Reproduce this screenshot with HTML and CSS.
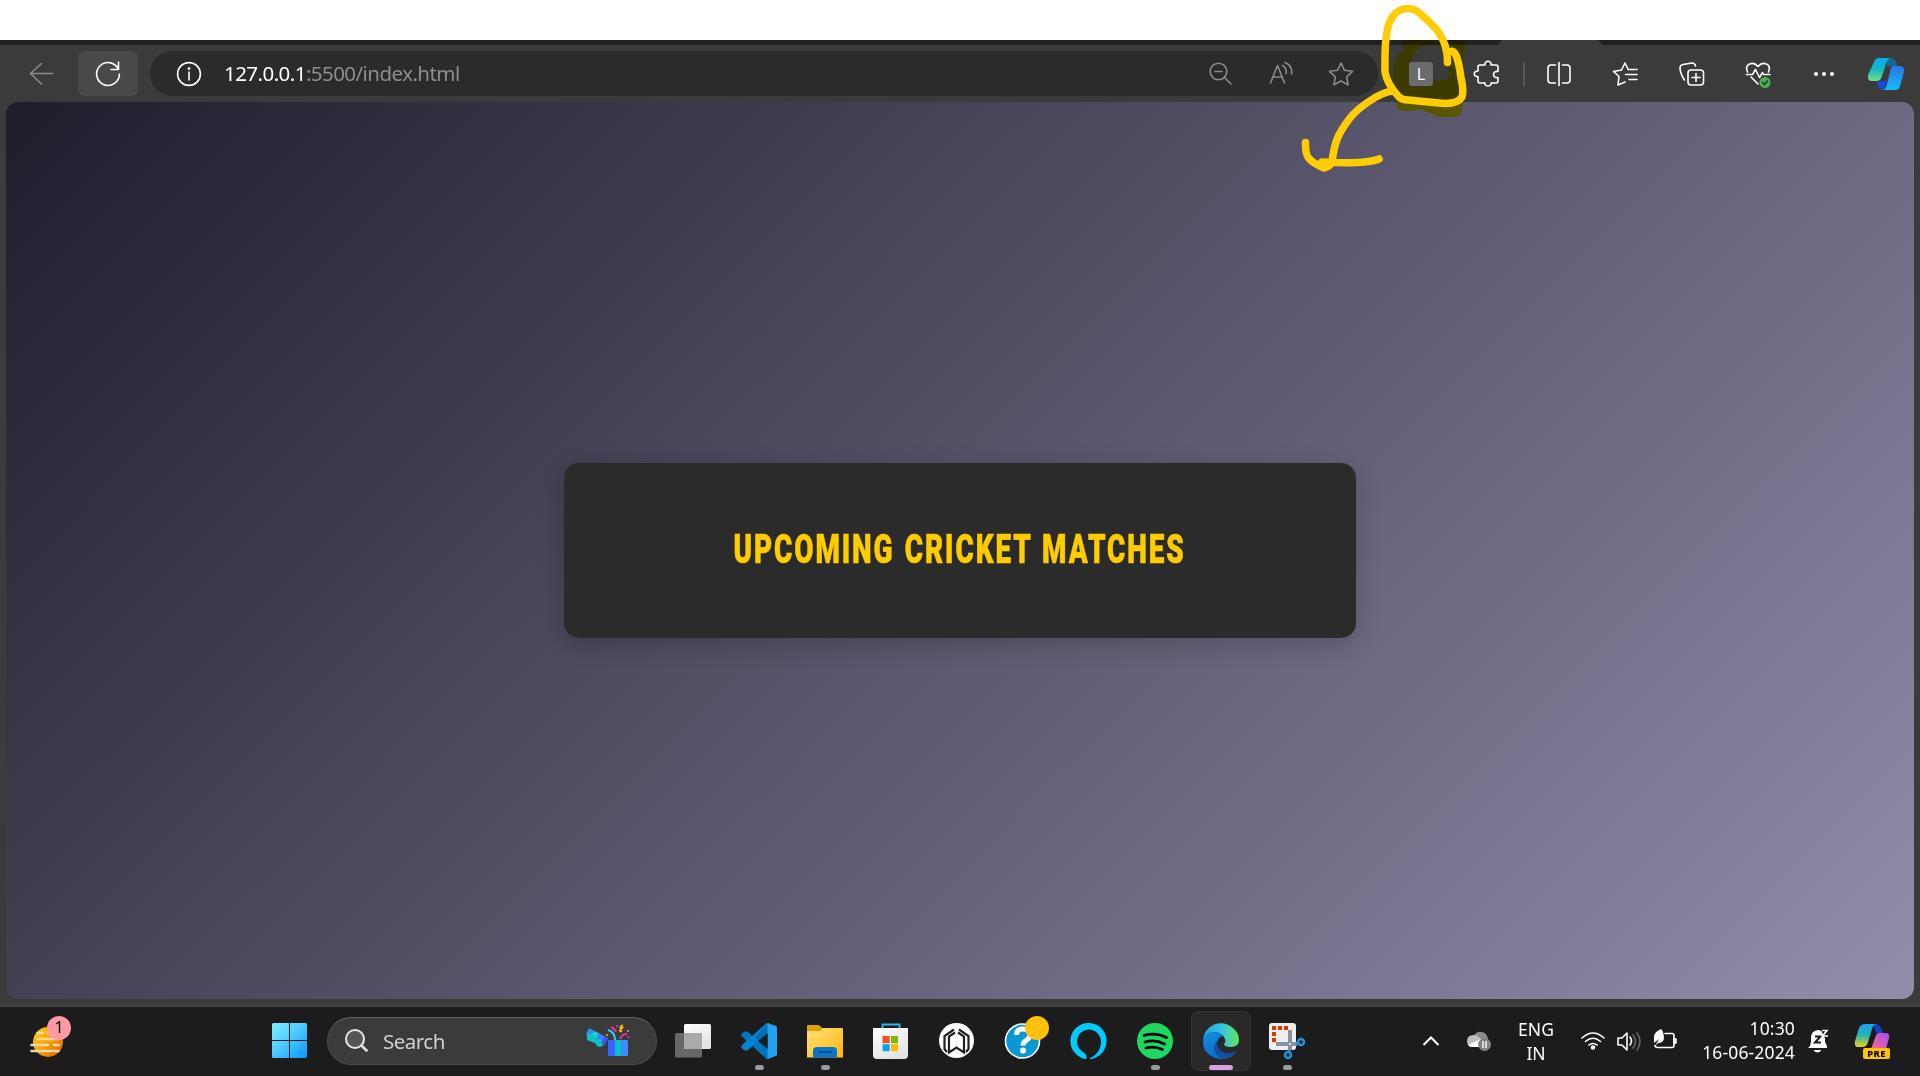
FILE: index.html
```html
<!DOCTYPE html>
<html lang="en">
<head>
<meta charset="utf-8">
<title>Upcoming Cricket Matches</title>
<link rel="stylesheet" href="styles.css">
</head>
<body>
<div class="top-space"></div>
<div class="browser">
  <div class="tab-strip"><span class="active-tab"></span></div>
  <div class="toolbar">
    <span class="nav-back"><svg width="36" height="36" viewBox="0 0 36 36" class="line muted"><path d="M29 17.500H6.500M17.500 7.500L6.500 17.500l11 10.500"/></svg></span>
    <span class="nav-reload"><svg width="36" height="36" viewBox="0 0 36 36" class="line"><path d="M28 12.500A11.400 11.400 0 1 0 29.400 18M28.500 6v7.500H21"/></svg></span>
    <div class="address">
      <svg width="36" height="36" viewBox="0 0 36 36" class="line"><circle cx="18" cy="18" r="11.400"/><path d="M18 16v8"/><circle cx="18" cy="12.600" r=".6"/></svg>
      <span class="url"><b>127.0.0.1</b>:5500/index.html</span>
      <div class="address-actions">
        <svg width="36" height="36" viewBox="0 0 36 36" class="line muted"><circle cx="15.500" cy="15.500" r="8.300"/><path d="M12 15.500h7M21.800 21.800L28 28"/></svg>
        <svg width="36" height="36" viewBox="0 0 36 36" class="line muted"><path d="M7.500 27L14.500 9.500 21.500 27M10 21h9M19.500 9.500q4.500 2.500 3.500 8M22 6.500q8 3.500 6.500 11.500"/></svg>
        <svg width="36" height="36" viewBox="0 0 36 36" class="line muted"><path d="M18 7l3.500 7.300 8 1-5.900 5.600 1.500 8L18 25l-7.100 3.900 1.500-8-5.900-5.600 8-1z"/></svg>
      </div>
    </div>
    <span class="extension">L</span>
    <svg class="line ext-menu" width="36" height="36" viewBox="0 0 36 36"><path d="M10 9h5c-1-5 7-5 6 0h5q2 0 2 2v4.500c-6-1-6 7 0 6V25q0 2-2 2h-5c1 4-7 4-6 0h-5q-2 0-2-2v-4.500c-5 1-5-6 0-5.500V11q0-2 2-2z"/></svg>
    <span class="divider"></span>
    <div class="browser-actions">
      <svg class="line" width="36" height="36" viewBox="0 0 36 36"><path d="M14.500 9H10q-3 0-3 3v12q0 3 3 3h4.500M21.500 9H26q3 0 3 3v12q0 3-3 3h-4.500M18 6.500v23"/></svg>
      <svg class="line" width="36" height="36" viewBox="0 0 36 36"><path d="M21 13l-3-6-3.500 7-8 1.500 5.500 5-1 8.500L18 26M21 13.500h9M18.500 18.500H30M22 23.500h8"/></svg>
      <svg class="line" width="36" height="36" viewBox="0 0 36 36"><rect x="14" y="14" width="15.500" height="15" rx="3"/><path d="M22 17.500v8M18 21.500h8M10.500 24C8 21 6 15 6 12q0-3 3-3.500l9-1.500q3 0 3.500 3"/></svg>
      <svg class="line" width="36" height="36" viewBox="0 0 36 36"><path d="M7.500 16C4 8 13 4.500 18 10.500 23 4.500 32 8 28.500 16M6.500 18.500h6l3-5 4 8 3-5 1 2h6.500M11 21l7 7"/><circle cx="25" cy="26.500" r="5.500" class="ok"/><path d="M22.500 26.500l2 2 3-3.500" class="tick"/></svg>
      <svg width="36" height="36" viewBox="0 0 36 36" class="white"><circle cx="10" cy="18" r="2"/><circle cx="18" cy="18" r="2"/><circle cx="26" cy="18" r="2"/></svg>
    </div>
    <svg class="copilot" width="38" height="36" viewBox="0 0 38 36">
      <defs>
        <linearGradient id="cp1" x2="0" y2="1"><stop offset="0" stop-color="#08aaf0"/><stop offset=".5" stop-color="#16b8c5"/><stop offset="1" stop-color="#6ee37c"/></linearGradient>
        <linearGradient id="cp2" y1="1" x2="0" y2="0"><stop offset="0" stop-color="#13bdf9"/><stop offset="1" stop-color="#2876e4"/></linearGradient>
      </defs>
      <path d="M20 2h4q5 0 6 8h-6l-4 1z" fill="#126a94"/>
      <path d="M10 25h10l-3 9q-5 0-6-4z" fill="#174bdb"/>
      <path d="M7 6Q8 2 12 2h12q-4 1-5 6l-4 12q-1 5-6 5H5q-5 0-4-6z" fill="url(#cp1)"/>
      <path d="M26 10h7q5 0 4 6l-4 14q-1 4-5 4H15q4 0 5-6l3-12q1-6 3-6z" fill="url(#cp2)"/>
    </svg>
  </div>
  <main class="page">
    <section class="card"><h1><span>Upcoming Cricket Matches</span></h1></section>
  </main>
</div>
<div class="taskbar">
  <div class="weather">
    <svg width="40" height="40" viewBox="0 0 40 40">
      <defs><linearGradient id="sun" x2="1" y2="1"><stop offset="0" stop-color="#ffd208"/><stop offset=".5" stop-color="#f8a10a"/><stop offset="1" stop-color="#de5200"/></linearGradient></defs>
      <circle cx="20" cy="21" r="15" fill="url(#sun)"/>
      <path d="M9.500 12h5.500M9.500 18h22M3.500 24h17M26 24h5M3.500 30h27M20 12h2" stroke="#f0d9a0" stroke-width="2.600" stroke-linecap="round"/>
    </svg>
    <span class="count">1</span>
  </div>
  <svg class="start" width="35" height="35" viewBox="0 0 35 35">
    <defs><linearGradient id="win" gradientUnits="userSpaceOnUse" x2="35" y2="35"><stop offset="0" stop-color="#7cf3ff"/><stop offset=".5" stop-color="#4cc8ff"/><stop offset="1" stop-color="#0894ff"/></linearGradient></defs>
    <path d="M1.500 0H17v17H0V1.500Q0 0 1.500 0zM18 0h15.500Q35 0 35 1.500V17H18zM0 18h17v17H1.500Q0 35 0 33.500zM18 18h17v15.500q0 1.500-1.500 1.500H18z" fill="url(#win)"/>
  </svg>
  <div class="search">
    <svg width="24" height="24" viewBox="0 0 24 24"><circle cx="10" cy="10" r="9" fill="#555" stroke="#e6e9ec" stroke-width="2"/><path d="M16.500 16.500l5 5" stroke="#d6dce2" stroke-width="2.800" stroke-linecap="round"/></svg>
    <span>Search</span>
    <svg class="gift" width="46" height="34" viewBox="0 0 46 34">
      <path d="M4 4l19 10-4 7L1 10z" fill="#3c83f7"/><path d="M9 7l5 2.500-4 7-5-3z" fill="#14cfd4"/><path d="M2 10l4-1 5 6 6 1 1 6-5 1-3-4-8-3z" fill="#0bc4c4"/><path d="M19 12l4 2-4 7-3-2z" fill="#345bf5"/>
      <rect x="23" y="16" width="20" height="16" rx="1.500" fill="#3e8dff"/><path d="M23 16h7v16h-7z" fill="#3565ff"/><path d="M30.500 16h5v16h-5z" fill="#00c7bd"/>
      <path d="M23 6q7 2 7 10" stroke="#37d1ee" stroke-width="2" fill="none"/><path d="M26 3q4 2 5 5M35 15q2-5 7-5" stroke="#ee2cae" stroke-width="2" fill="none"/><path d="M38 1q-5 3-1 3-4 4 0 3" stroke="#ffb218" stroke-width="2" fill="none"/>
      <g fill="#ed30aa"><circle cx="32" cy="2" r="1"/><circle cx="43.500" cy="13" r="1"/></g><g fill="#f6b137"><circle cx="22" cy="11" r="1"/><circle cx="43" cy="7" r="1"/></g>
    </svg>
  </div>
  <div class="apps">
    <span class="app"><svg width="38" height="38" viewBox="0 0 38 38">
      <defs><linearGradient id="tv" x2=".5" y2="1"><stop offset="0" stop-color="#fff"/><stop offset="1" stop-color="#e3e3e3"/></linearGradient></defs>
      <rect x="1" y="11" width="27" height="24.500" rx="1.500" fill="#686868"/><rect x="10" y="2" width="27" height="25" rx="1.500" fill="url(#tv)"/><path d="M10 11h18v16H10z" fill="#aaa"/></svg></span>
    <span class="app running"><svg width="38" height="38" viewBox="0 0 38 38">
      <path d="M2 11l3-1.500q1.500-.5 3 .5L29 28v9q-2 .5-3-.5L2 14.500q-1.500-1.700 0-3.500z" fill="#0077bd"/><path d="M2 26.500l3 2q1.500.5 3-.5L29 10V1q-2-.4-3 .500L2 23q-1.500 1.700 0 3.500z" fill="#0680d0"/><path d="M15 15.500L27.500 2v9.500l-9 7.500z" fill="#0070b4"/><path d="M27.500 1L36 4q1 .5 1 2v26q0 1.500-1 2l-8.500 3V1z" fill="#22a1f1"/><path d="M18 19l9.500-7.500v15z" fill="#1c1c1c"/></svg></span>
    <span class="app running"><svg width="38" height="38" viewBox="0 0 38 38">
      <defs><linearGradient id="fold" x2="1" y2="1"><stop offset="0" stop-color="#ffe078"/><stop offset="1" stop-color="#fcb80f"/></linearGradient></defs>
      <path d="M1 4q0-1 1-1h10q2 0 4 3H36v10H1z" fill="#dda006"/><path d="M1 10q0-1 1-1h12l3-3h19q1 0 1 1v28.500H1z" fill="url(#fold)"/><path d="M7 35.500v-6.500q0-4 4-4h16q4 0 4 4v6.500z" fill="#0875c8"/><path d="M12 30h14" stroke="#054c92" stroke-width="2"/></svg></span>
    <span class="app"><svg width="38" height="38" viewBox="0 0 38 38">
      <path d="M10.500 9V2.500h17V9" fill="none" stroke="#29b6f3" stroke-width="2"/><path d="M1 6h35v27q0 4-4 4H5q-4 0-4-4z" fill="url(#tv)"/><path d="M10.500 14h7.200v7.200h-7.200z" fill="#f25022"/><path d="M19 14h7v7.200h-7z" fill="#7fba00"/><path d="M10.500 22.200h7.200v7h-7.200z" fill="#00a4ef"/><path d="M19 22.200h7v7h-7z" fill="#ffb900"/></svg></span>
    <span class="app"><svg width="38" height="38" viewBox="0 0 38 38">
      <circle cx="18.500" cy="18.500" r="17.500" fill="#fff"/><g fill="none" stroke="#202020" stroke-width="2.200"><path d="M9 30l-2.500-3V14L16 7.500M28 30l2.500-3V14L21 7.500"/><path d="M17 10.500l-6 4V30.500l7.500-5 7.500 5V14.500l-6-4"/></g></svg></span>
    <span class="app"><svg width="38" height="38" viewBox="0 0 38 38">
      <circle cx="18.500" cy="19" r="17" fill="#0899d5" stroke="#fff" stroke-width="1.600"/><path d="M12.500 13q0-6 6.500-6 7 0 7 6 0 3-4 5.500-3 2-3 5" fill="none" stroke="#fff" stroke-width="5"/><circle cx="19" cy="28.500" r="3" fill="#fff"/></svg><i class="dot"></i></span>
    <span class="app"><svg width="38" height="38" viewBox="0 0 38 38"><path d="M16.500 37A18.100 18.100 0 1 1 19 37.100Q31 31 31 20A12 12 0 1 0 13 30q4 2 3.500 7z" fill="#00caff"/></svg></span>
    <span class="app running"><svg width="38" height="38" viewBox="0 0 38 38"><circle cx="19" cy="19" r="18" fill="#1ed760"/><path d="M8 13.500q12-3.500 22.500 2M9 20q10-3 19.500 2M10 26q8-2.500 16.500 1.500" fill="none" stroke="#000" stroke-width="2.800" stroke-linecap="round"/></svg></span>
    <span class="app active"><svg width="38" height="38" viewBox="0 0 38 38">
      <defs><linearGradient id="e1"><stop offset="0" stop-color="#229cdf"/><stop offset=".5" stop-color="#32c4e2"/><stop offset="1" stop-color="#66e35b"/></linearGradient><linearGradient id="e2" x2=".6" y2="1"><stop offset="0" stop-color="#1290e4"/><stop offset="1" stop-color="#096bc4"/></linearGradient></defs>
      <path d="M1 18Q2 7 12 2.500 23-1 31 6q6 5 6 12 0 7-8 7-7 0-7-3 2-2 1-5-2-6-10-7Q5 10 1 18z" fill="url(#e1)"/><path d="M1 20Q2 10 12 10q7 0 10 4-6 0-7 7-1 10 10 15-8 3-16-2Q1 29 1 20z" fill="url(#e2)"/><path d="M15 19q0 13 14 12 4-1 6-3-4 9-14 9Q12 33 12 26q0-4 3-7z" fill="#134f9d"/></svg></span>
    <span class="app running"><svg width="38" height="38" viewBox="0 0 38 38">
      <rect x="1" y="1" width="27" height="27" rx="3" fill="#eee"/><path d="M4 4h4v4H4zM10 4h4v4h-4zM16 4h4v4h-4zM4 10h4v4H4zM4 16h4v4H4z" fill="#d83b01"/><path d="M22 8v20M8 22h21" stroke="#87919b" stroke-width="4"/><circle cx="22" cy="22" r="1" fill="#fff"/><g fill="none" stroke="#1d96e0" stroke-width="2.500"><circle cx="33" cy="20" r="3"/><circle cx="20" cy="33" r="3"/><path d="M28 22l2-1M22 28l-1 2"/></g></svg></span>
  </div>
  <div class="tray">
    <svg class="chevron" width="18" height="12" viewBox="0 0 18 12"><path d="M1.500 10L9 2.500l7.500 7.500" fill="none" stroke="#fff" stroke-width="2"/></svg>
    <svg class="cloud" width="26" height="22" viewBox="0 0 26 22"><path d="M7 7q3-6 9-5 5 1 6 7v6H8z" fill="#8b8b8b"/><path d="M1 11q0-6 7-6 3 0 7 4l2 8H6q-5-1-5-6z" fill="#bdbdbd"/><path d="M2 15l13-6 2 8H6q-3 0-4-2z" fill="#fff"/><circle cx="18.500" cy="14.500" r="6.500" fill="#828282"/><path d="M17 11v7M20 11v7" stroke="#fff" stroke-width="1.400"/></svg>
    <div class="language"><span>ENG</span><span>IN</span></div>
    <div class="status">
      <svg width="24" height="24" viewBox="0 0 24 24" class="line"><path d="M1 9q11-10 22 0M4.500 12.500q7.500-6.500 15 0M8 16q4-3 8 0"/><circle cx="12" cy="18.500" r="1.500" fill="#fff"/></svg>
      <svg width="24" height="24" viewBox="0 0 24 24" class="line"><path d="M1 9h4l5-5v17l-5-5H1zM13 8q3 4 0 8"/><path d="M16 6q5 6.500 0 13M20 4q6 8.500 0 17" stroke="#666"/></svg>
      <svg width="24" height="24" viewBox="0 0 24 24" class="line"><path d="M12 4.500h7q2 0 2 2v10q0 2-2 2H5q-3 0-3-2"/><path d="M21 10h2v4h-2z"/><path d="M1 14V8q0-5 7-8 2 1 3 8 0 6-6 6l-3 3 4-7" fill="#fff" stroke="none"/></svg>
    </div>
    <div class="clock"><span>10:30</span><span>16-06-2024</span></div>
    <svg class="bell" width="22" height="26" viewBox="0 0 22 26"><path d="M3 18l1-4V10q0-7 6.500-8h1q6.500 1 6.500 8v4l2 4v2H1z" fill="#fff"/><path d="M6.500 22h8q-4 5-8 0z" fill="#fff"/><path d="M8 8.500h5.500L8 14.500h6" fill="none" stroke="#1c1c1c" stroke-width="2"/><path d="M14 1.500h8v8h-5z" fill="#1c1c1c"/><path d="M15 2.500h5L15.500 8h5.500" fill="none" stroke="#fff" stroke-width="1.600"/></svg>
    <div class="preview"><svg width="36" height="30" viewBox="0 0 36 30">
      <defs><linearGradient id="p1" x2="0" y2="1"><stop offset="0" stop-color="#18a2f4"/><stop offset=".5" stop-color="#28b5b3"/><stop offset="1" stop-color="#f1d219"/></linearGradient><linearGradient id="p2" x1="1" x2="0" y2="1"><stop offset="0" stop-color="#a24df0"/><stop offset="1" stop-color="#ff6690"/></linearGradient></defs>
      <path d="M19 1h4q3 0 6 9h-7z" fill="#173fc4"/><path d="M5 5q2-4 6-4h11q-3 1-4 5l-4 13q-1 5-6 5H4q-4 0-3-6z" fill="url(#p1)"/><path d="M24 10h8q4 0 3 5l-3 11H17l4-11q1-4 3-5z" fill="url(#p2)"/></svg><span>PRE</span></div>
  </div>
</div>
<svg class="ink highlight" width="190" height="180" viewBox="1290 0 190 180"><path fill-rule="evenodd" fill="#ff0" d="M1403 40H1465L1464 66 1462 108Q1462 117 1453 117H1442Q1435 116 1420 109L1413 111H1404Q1396 110 1396 103L1393 75Q1393 57 1404 50ZM1409 84Q1408 54 1422 46 1447 42 1448 55L1447 80Q1430 79 1409 86Z"/></svg>
<svg class="ink" width="190" height="180" viewBox="1290 0 190 180"><path fill="none" stroke="#ffcd05" stroke-width="7.500" stroke-linecap="round" stroke-linejoin="round" d="M1447.500 62.500C1448 35 1430 22 1417 11 1406 5 1392 10 1388 27 1384 42 1385 60 1385 72Q1387 84 1399 97 1402 100 1408 100L1439 103Q1457 105 1462 97 1464 90 1461 78 1457 47 1450 52M1393 91C1379 92 1357 109 1350 118 1337 135 1335 142 1332 161M1305.500 142.500C1305 157 1308 161 1324 168Q1331 167 1332 161M1322 162C1340 163 1367 164 1379 159"/></svg>
</body>
</html>
```
FILE: styles.css
```css
* { box-sizing: border-box; }
body {
  margin: 0;
  width: 1920px;
  height: 1076px;
  overflow: hidden;
  position: relative;
  background: #fff;
  font-family: "Noto Sans", "Open Sans", sans-serif;
  color: #fff;
}
svg { display: block; flex: none; }
.line { fill: none; stroke: #fff; stroke-width: 1.6; stroke-linejoin: round; stroke-linecap: round; }
.muted { stroke: #8b8b8b; }
.white { fill: #fff; }
.ok { fill: #4caf50; stroke: none; }
.tick { stroke: #263b27; }

.top-space { height: 40px; }
.browser { height: 967px; background: #3b3b3b; border-bottom: 2px solid #434343; }
.tab-strip { height: 5px; background: #202020; display: flex; }
.active-tab { width: 106px; height: 5px; margin-left: 1497px; background: #3b3b3b; clip-path: polygon(5px 0, 101px 0, 100% 100%, 0 100%); }
.toolbar { height: 57px; display: flex; align-items: center; padding-left: 24px; }
.nav-back { width: 54px; }
.nav-reload { width: 60px; height: 45px; border-radius: 6px; background: #494949; display: grid; place-items: center; }
.address { width: 1228px; height: 45px; margin-left: 12px; border-radius: 23px; background: #2b2b2b; display: flex; align-items: center; padding: 0 19px 0 21px; }
.url { margin: -1px 0 0 17px; font-size: 20.5px; letter-spacing: -.55px; color: #8e8e8e; white-space: nowrap; }
.url b { font-weight: 400; color: #fff; }
.address-actions { margin-left: auto; display: flex; gap: 24px; }
.extension { width: 24px; height: 24px; margin-left: 31px; border-radius: 3px; background: #6b6b6b; font-size: 16px; line-height: 24px; text-align: center; position: relative; z-index: 2; }
.ext-menu { margin-left: 37px; }
.divider { width: 2px; height: 24px; margin-left: 17px; background: #585858; }
.browser-actions { display: flex; gap: 30.25px; margin-left: 16px; }
.copilot { margin-left: 25px; }

.page { width: 1908px; height: 897px; margin: 0 6px; border-radius: 12px; background: linear-gradient(135deg, #1f1c2c, #928dab); display: flex; align-items: center; justify-content: center; }
.card { width: 792px; height: 175px; border-radius: 15px; background: #2b2b2b; box-shadow: 0 6px 24px rgba(0, 0, 0, .2); display: flex; justify-content: center; padding-top: 61.5px; }
h1 { margin: 0; width: 448px; height: 48px; display: flex; justify-content: center; font: 900 40.5px/48px Roboto, sans-serif; color: #fc0; text-transform: uppercase; white-space: nowrap; letter-spacing: 2.8px; word-spacing: 2px; }
h1 span { flex: none; transform: scaleX(.688); -webkit-text-stroke: .6px #fc0; }

.taskbar { height: 69px; padding-bottom: 1.5px; background: #1c1c1c; display: flex; align-items: center; }
.weather { width: 40px; margin-left: 28px; position: relative; }
.count { position: absolute; left: 19px; top: -5px; width: 24px; height: 24px; border-radius: 50%; background: #ff99a4; color: #000; font-size: 16px; line-height: 23px; text-align: center; }
.start { margin-left: 204px; }
.search { width: 330px; height: 48px; margin-left: 20px; border: 1px solid #4d4d4d; border-top-color: #666; border-radius: 24px; background: #3b3b3b; display: flex; align-items: center; padding: 0 25px 0 17px; font-size: 20.5px; letter-spacing: -.5px; color: #d0d0d0; }
.search span { margin-left: 14px; }
.gift { margin-left: auto; }
.apps { display: flex; gap: 6px; margin-left: 6px; }
.app { width: 60px; height: 60px; border-radius: 7px; display: grid; place-items: center; position: relative; }
.running::after, .active::after { content: ""; position: absolute; left: 25.500px; bottom: 1px; width: 9px; height: 5px; border-radius: 3px; background: #999; }
.active { background: #292929; border: 1px solid #333; }
.active::after { left: 17px; bottom: 0; width: 24px; background: #dc9ee6; }
.dot { position: absolute; left: 32px; top: 5px; width: 24px; height: 24px; border-radius: 50%; background: #ffc10d; }
.tray { display: flex; align-items: center; margin-left: 105px; }
.cloud { margin-left: 26px; }
.language { width: 60px; margin-left: 14px; text-align: center; }
.language span, .clock span { display: block; font-size: 17.5px; line-height: 24px; }
.status { display: flex; gap: 12px; margin-left: 15px; }
.clock { width: 120px; margin: -1px 0 0 -2px; text-align: right; white-space: nowrap; letter-spacing: .15px; }
.bell { margin-left: 12px; }
.preview { width: 36px; height: 36px; margin-left: 25px; position: relative; }
.preview span { position: absolute; left: 9px; bottom: 0; width: 27px; height: 11px; border-radius: 2px; background: #ffc400; color: #000; font-size: 9.5px; font-weight: 800; line-height: 11px; text-align: center; letter-spacing: .4px; }
.ink { position: absolute; left: 1290px; top: 0; pointer-events: none; z-index: 3; }
.highlight { mix-blend-mode: multiply; z-index: 1; clip-path: inset(40px 0 0 0); }
```
